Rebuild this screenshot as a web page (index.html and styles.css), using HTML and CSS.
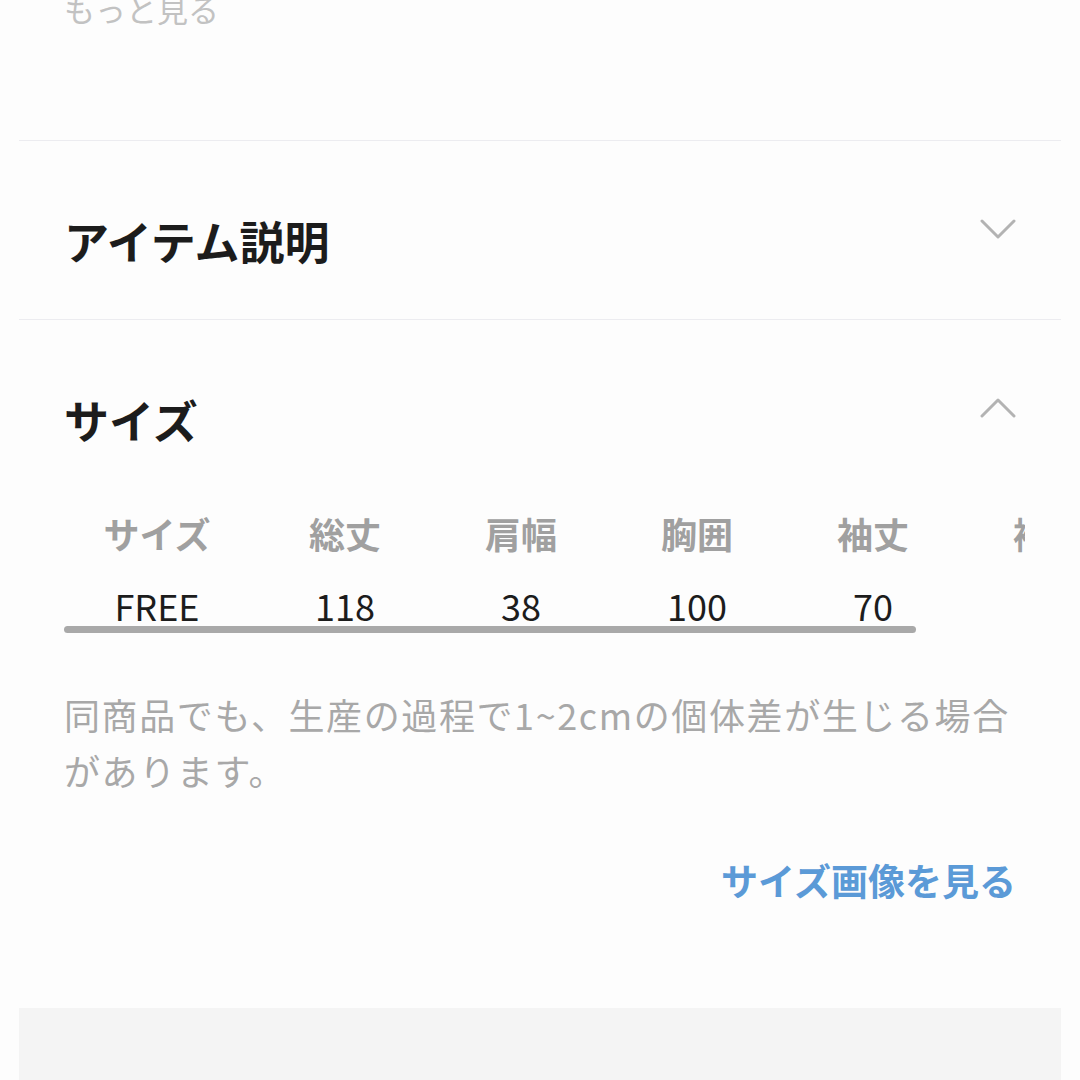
FILE: index.html
```html
<!DOCTYPE html>
<html lang="ja">

<head>
    <meta charset="UTF-8">
    <meta name="viewport" content="width=device-width, initial-scale=1.0">
    <title>アイテム詳細</title>
    <link rel="stylesheet" href="styles.css">
</head>

<body>
    <div class="card">
        <div class="more-wrap">
            <div class="more">もっと見る</div>
        </div>

        <section class="accordion">
            <div class="acc-head">
                <h2 class="acc-title">アイテム説明</h2>
                <svg class="chevron" width="36" height="20" viewBox="0 0 36 20">
                    <polyline points="2,2 18,18 34,2" />
                </svg>
            </div>
        </section>

        <section class="accordion open">
            <div class="acc-head">
                <h2 class="acc-title">サイズ</h2>
                <svg class="chevron" width="36" height="20" viewBox="0 0 36 20">
                    <polyline points="2,18 18,2 34,18" />
                </svg>
            </div>

            <div class="size-table-wrap">
                <div class="size-table">
                    <div class="col col-first">
                        <div class="th">サイズ</div>
                        <div class="td">FREE</div>
                    </div>
                    <div class="col">
                        <div class="th">総丈</div>
                        <div class="td">118</div>
                    </div>
                    <div class="col">
                        <div class="th">肩幅</div>
                        <div class="td">38</div>
                    </div>
                    <div class="col">
                        <div class="th">胸囲</div>
                        <div class="td">100</div>
                    </div>
                    <div class="col">
                        <div class="th">袖丈</div>
                        <div class="td">70</div>
                    </div>
                    <div class="col">
                        <div class="th">裄丈</div>
                        <div class="td">-</div>
                    </div>
                </div>
            </div>
            <div class="scrollbar"></div>

            <p class="note">同商品でも、生産の過程で1~2cmの個体差が生じる場合があります。</p>

            <div class="link-row">
                <a class="size-link" href="#">サイズ画像を見る</a>
            </div>
        </section>
    </div>

    <div class="next-card"></div>
</body>

</html>
```

FILE: styles.css
```css
body {
    font-family: "Noto Sans CJK JP", "Noto Sans", sans-serif;
    margin: 0;
    padding: 0;
    background-color: #fdfdfd;
    overflow: hidden;
}

.card {
    margin: 0 19px;
}

/* top "more" link, partly scrolled out of view */
.more-wrap {
    display: flow-root;
    height: 140px;
    padding: 0 45px;
}

.more {
    margin-top: -11px;
    font-size: 31px;
    line-height: 40px;
    color: #c2c2c2;
}

.accordion {
    border-top: 1px solid #ececf0;
    padding: 0 45px;
}

.acc-head {
    display: flex;
    justify-content: space-between;
    align-items: flex-start;
    height: 178px;
    padding-top: 70px;
    box-sizing: border-box;
}

.open .acc-head {
    height: auto;
}

.acc-title {
    margin: 0;
    font-size: 45px;
    line-height: 60px;
    font-weight: 700;
    color: #1c1c1c;
}

.chevron {
    margin-top: 8px;
    fill: none;
    stroke: #b3b3b3;
    stroke-width: 3;
    stroke-linecap: round;
    stroke-linejoin: round;
}

/* horizontally scrolling table, only clipped left/right */
.size-table-wrap {
    margin-top: 57px;
    margin-left: -7px;
    width: 968px;
    clip-path: inset(-20px 0 -20px 0);
}

.size-table {
    display: flex;
}

.col {
    flex: 0 0 176px;
    display: flex;
    flex-direction: column;
    align-items: center;
}

.col-first {
    flex-basis: 200px;
}

.th {
    font-size: 36px;
    line-height: 52px;
    font-weight: 700;
    color: #a0a0a0;
}

.td {
    margin-top: 25px;
    font-size: 36px;
    line-height: 42px;
    color: #1c1c1c;
}

.scrollbar {
    width: 852px;
    height: 7px;
    border-radius: 4px;
    background-color: #a9a9a9;
}

.note {
    margin: 53px 0 0;
    font-size: 36px;
    line-height: 56px;
    letter-spacing: 1.6px;
    color: #a8a8a8;
}

.link-row {
    display: flex;
    justify-content: flex-end;
    margin-top: 57px;
    height: 153px;
}

.size-link {
    font-size: 37px;
    line-height: 50px;
    font-weight: 700;
    color: #5b9ad7;
    text-decoration: none;
}

.next-card {
    margin: 0 19px;
    height: 200px;
    background-color: #f4f4f4;
}
```
